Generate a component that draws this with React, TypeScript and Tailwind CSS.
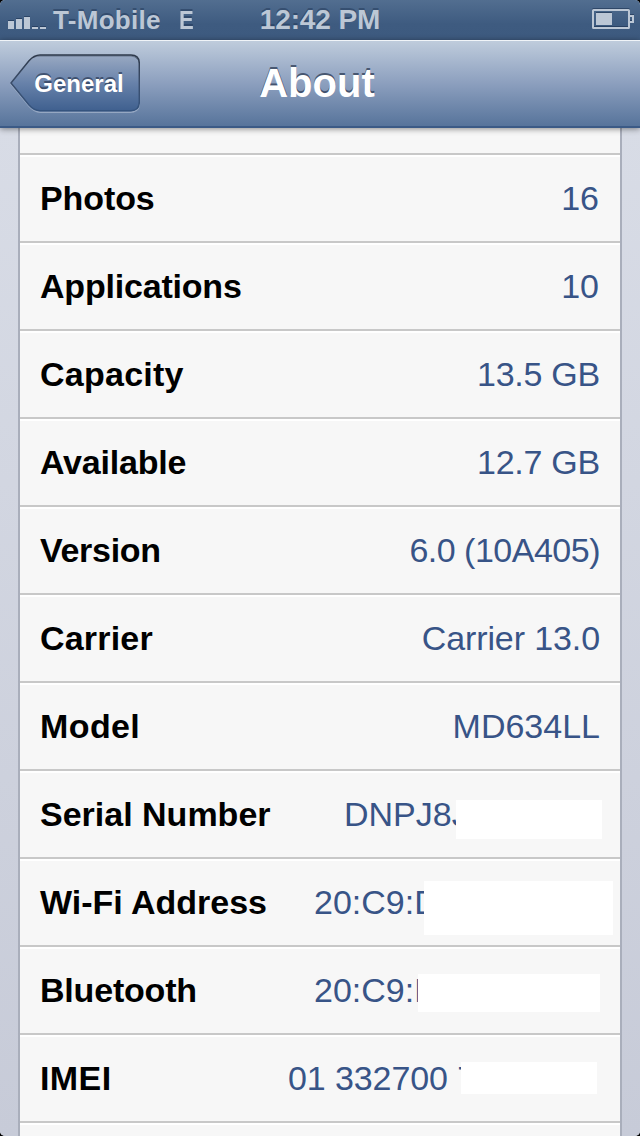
import clsx from 'clsx';

interface Row {
  label: string;
  labelClass?: string;
  value: string;
  valueClass?: string;
  // position of the block hiding the private part of the value
  mask?: string;
}

const rows: Row[] = [
  { label: 'Photos', labelClass: 'tracking-[-0.1px]', value: '16', valueClass: 'pr-px' },
  { label: 'Applications', labelClass: 'tracking-[-0.2px]', value: '10', valueClass: 'pr-px' },
  { label: 'Capacity', labelClass: 'tracking-[0.25px]', value: '13.5 GB', valueClass: 'tracking-[-0.25px]' },
  { label: 'Available', labelClass: 'tracking-[-0.2px]', value: '12.7 GB', valueClass: 'tracking-[-0.25px]' },
  { label: 'Version', labelClass: 'tracking-[-0.3px]', value: '6.0 (10A405)', valueClass: 'tracking-[-0.5px]' },
  { label: 'Carrier', labelClass: 'tracking-[0.2px]', value: 'Carrier 13.0', valueClass: 'tracking-[-0.1px]' },
  { label: 'Model', labelClass: 'tracking-[0.4px]', value: 'MD634LL' },
  {
    label: 'Serial Number',
    value: 'DNPJ8J',
    valueClass: 'w-[256px]',
    mask: 'left-[436px] top-[29px] w-[146px] h-[39px]',
  },
  {
    label: 'Wi-Fi Address',
    value: '20:C9:D',
    valueClass: 'w-[286px]',
    mask: 'left-[404px] top-[22px] w-[189px] h-[54px]',
  },
  {
    label: 'Bluetooth',
    labelClass: 'tracking-[-0.2px]',
    value: '20:C9:D',
    valueClass: 'w-[286px]',
    mask: 'left-[398px] top-[27px] w-[182px] h-[38px]',
  },
  {
    label: 'IMEI',
    labelClass: 'tracking-[0.4px]',
    value: '01 332700 7',
    valueClass: 'w-[312px] tracking-[-0.1px]',
    mask: 'left-[441px] top-[27px] w-[136px] h-[32px]',
  },
];

function SignalBars() {
  return (
    <svg width="40" height="14" viewBox="0 0 40 14" fill="#bcc7d5" className="drop-shadow-[0_-1px_0_rgba(20,40,70,0.5)]">
      <rect x="0" y="5" width="6" height="8" />
      <rect x="8" y="3" width="6" height="10" />
      <rect x="16" y="1" width="6" height="12" />
      <rect x="24" y="11" width="6" height="2" />
      <rect x="32" y="11" width="6" height="2" />
    </svg>
  );
}

function Battery() {
  return (
    <svg width="42" height="20" viewBox="0 0 42 20" fill="none" className="drop-shadow-[0_-1px_0_rgba(20,40,70,0.5)]">
      <rect x="1" y="1" width="36" height="18" rx="0.5" stroke="#bcc7d5" strokeWidth="2" />
      <rect x="4" y="4" width="16" height="12" fill="#bcc7d5" />
      <path d="M38 7H41V13H38" stroke="#bcc7d5" strokeWidth="2" />
    </svg>
  );
}

function StatusBar() {
  return (
    <div className="grid h-10 grid-cols-[1fr_auto_1fr] bg-linear-to-b from-[#526e90] via-[#3e5b80] via-60% to-[#3d5a7f] px-2 text-[#bcc7d5] font-bold [text-shadow:0_-2px_0_rgba(20,40,70,0.4)]">
      <div className="flex">
        <div className="pt-4">
          <SignalBars />
        </div>
        <span className="ml-[5px] pt-[5px] text-[26px] leading-[30px] tracking-[0.3px]">T-Mobile</span>
        <span className="ml-[18px] origin-left scale-x-[0.85] pt-[5px] text-[26px] leading-[30px]">E</span>
      </div>
      <span className="pt-1 text-[28px] leading-[32px] tracking-[-0.1px]">12:42 PM</span>
      <div className="flex justify-end pt-[9px] -mr-[2px]">
        <Battery />
      </div>
    </div>
  );
}

function BackButton() {
  return (
    <button className="relative h-[60px] w-[132px] text-white">
      <svg width="132" height="60" viewBox="0 0 132 60" className="absolute inset-0" fill="none">
        <defs>
          <linearGradient id="back" x1="0" y1="0" x2="0" y2="1">
            <stop offset="0" stopColor="#99a9c2" />
            <stop offset="0.5" stopColor="#6882aa" />
            <stop offset="1" stopColor="#3f608f" />
          </linearGradient>
          <linearGradient id="backEdge" x1="0" y1="0" x2="0" y2="1">
            <stop offset="0" stopColor="#2f3a4b" />
            <stop offset="0.5" stopColor="#3a4d6a" />
            <stop offset="1" stopColor="#35547f" />
          </linearGradient>
        </defs>
        <path
          d="M3 31L21 9Q26.500 3 32 3H122Q131.500 3 131.500 12V50Q131.500 59.200 122 59.200H32Q26.500 59.200 21 53Z"
          stroke="#a9b8cf"
          strokeOpacity="0.7"
          strokeWidth="1.500"
        />
        <path
          d="M3 30L21 7.800Q26 2 32 2H123Q131.300 2 131.300 10.500V49Q131.300 57.700 123 57.700H32Q26 57.700 21 52Z"
          fill="url(#back)"
          stroke="url(#backEdge)"
          strokeWidth="1.500"
          strokeLinejoin="round"
        />
        <path d="M25 4.500Q28.500 3 32 3H123Q128 3.300 129.500 6.500" stroke="#2f3a4b" strokeOpacity="0.45" />
      </svg>
      <span className="relative block pl-[18px] pt-px pr-2 text-[24px] font-bold leading-[52px] [text-shadow:0_-2px_0_rgba(30,45,70,0.6)]">
        General
      </span>
    </button>
  );
}

function NavBar() {
  return (
    <header className="relative z-10 grid h-[88px] grid-cols-[1fr_auto_1fr] border-t border-b-2 border-t-[#f0f4f8] border-b-[#3b5a86] bg-linear-to-b from-[#bfccdc] via-[#8c9fbe] via-50% to-[#57749b] px-2 shadow-[0_1px_6px_rgba(0,0,0,0.45)]">
      <div className="pt-3">
        <BackButton />
      </div>
      <h1 className="pt-[18px] -ml-[6px] text-[40px] font-bold leading-[48px] text-white [text-shadow:0_-2px_0_rgba(45,60,85,0.75)]">
        About
      </h1>
    </header>
  );
}

function InfoRow({ label, labelClass, value, valueClass, mask }: Row) {
  return (
    <li className="relative flex h-[88px] items-start justify-between border-t-2 border-[#c8c8c8] pl-5 pr-5 text-[34px] leading-[40px] shadow-[inset_0_2px_0_#ffffff]">
      <span className={clsx('pt-[23px] font-bold', labelClass)}>{label}</span>
      <span className={clsx('whitespace-nowrap pt-[23px] text-[#385487]', valueClass)}>{value}</span>
      {mask && <span className={clsx('absolute bg-white', mask)} />}
    </li>
  );
}

export default function App() {
  return (
    <div className="h-[1136px] w-[640px] bg-black font-['Liberation_Sans',Arial,sans-serif]">
      <div className="flex h-full flex-col overflow-hidden rounded-[5px] bg-[#d0d4df]">
        <StatusBar />
        <NavBar />
        <main className="min-h-0 flex-1 overflow-hidden bg-linear-to-b from-[#d8dce6] to-[#c7cbd8] px-[18px]">
          <ul className="h-full w-[604px] border-x-2 border-[#a9aebb] bg-[#f7f7f7] pt-[25px] text-black">
            {rows.map((row) => (
              <InfoRow key={row.label} {...row} />
            ))}
            <li className="h-[88px] border-t-2 border-[#c8c8c8] shadow-[inset_0_2px_0_#ffffff]" />
          </ul>
        </main>
      </div>
    </div>
  );
}
